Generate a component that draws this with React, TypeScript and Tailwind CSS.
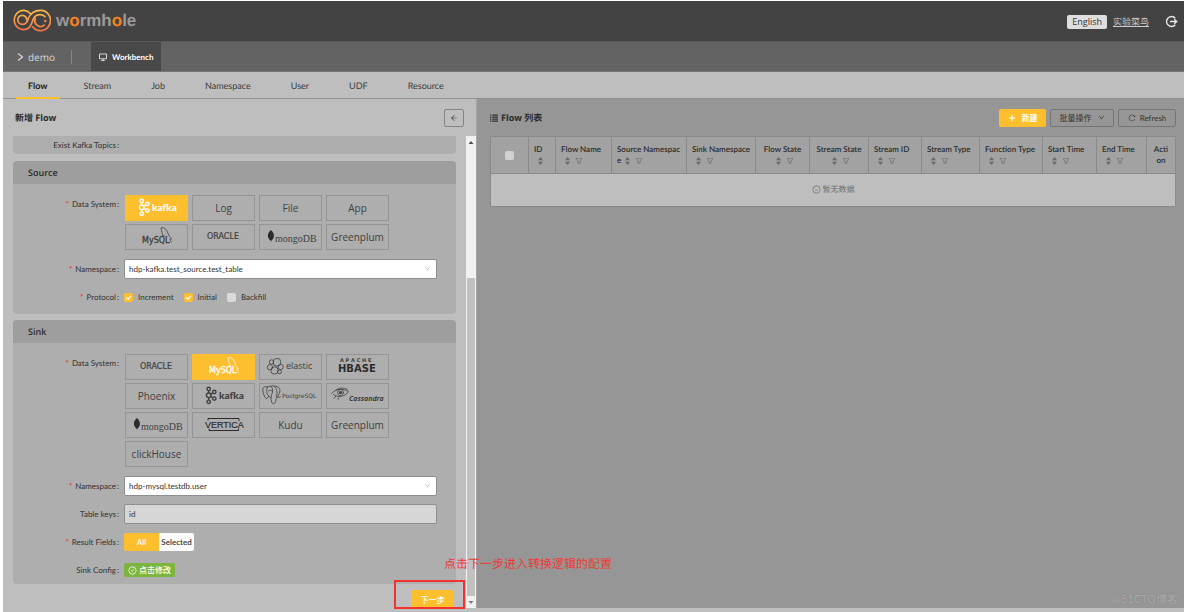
import type { ReactNode } from 'react';
import {
  AiOutlineArrowLeft,
  AiOutlineCheckCircle,
  AiOutlineDown,
  AiOutlineFilter,
  AiOutlinePlus,
  AiOutlineReload,
  AiOutlineFrown,
} from 'react-icons/ai';

const BODY = 'font-["Lato","Noto_Sans_CJK_SC",sans-serif] [text-rendering:geometricPrecision]';
const DISPLAY = 'font-["Open_Sans","Noto_Sans_CJK_SC",sans-serif]';

/* ---------- brand drawings ---------- */

function WormholeMark() {
  return (
    <svg width="38" height="24" viewBox="0 0 38 24" fill="none" strokeLinecap="round" aria-hidden="true">
      <defs>
        <linearGradient id="mark" x1="0" y1="0" x2="0" y2="24" gradientUnits="userSpaceOnUse">
          <stop offset="0" stopColor="#ffc247" />
          <stop offset="1" stopColor="#f4694a" />
        </linearGradient>
      </defs>
      <g stroke="url(#mark)" strokeWidth="1.7">
        <path d="M13.800 10.800A4.500 4.500 0 1 0 9.300 15.300C13.500 15.300 14.200 12.500 15.300 9.500C17.500 4 22 1.300 27.500 1.300A10 10.200 0 1 1 19.600 17.800" />
        <path d="M17.300 4.500A9.300 9.600 0 1 0 16.300 18.500C18.500 16 19 13.500 20 10.500C21.500 7 24.500 5.500 27.500 5.600C29.500 5.700 31 6.500 32 7.600" />
        <path d="M22.300 9.500A5.800 5.800 0 0 0 31.300 16.200" />
      </g>
      <circle cx="32.300" cy="12" r="1.200" fill="#f98a4a" />
    </svg>
  );
}

function Brand({ children }: { children: ReactNode }) {
  return (
    <svg width="61" height="24" viewBox="0 0 61 24" fill="none" stroke="none" className="shrink-0" aria-hidden="true">
      {children}
    </svg>
  );
}

function Kafka() {
  return (
    <Brand>
      <g stroke="currentColor" strokeWidth="1.400">
        <circle cx="15.700" cy="5" r="1.700" />
        <circle cx="15.700" cy="11.300" r="2.300" />
        <circle cx="15.700" cy="17.800" r="1.700" />
        <circle cx="21.300" cy="8" r="1.700" />
        <circle cx="21.300" cy="14.600" r="1.700" />
        <path d="M15.700 6.700V9M15.700 13.600V16M17.700 10.200L19.800 8.900M17.700 12.500L19.800 13.700" />
      </g>
      <text x="26" y="15" fill="currentColor" className="font-['Lato',sans-serif] text-[10px] font-black">kafka</text>
    </Brand>
  );
}

function MySql() {
  return (
    <Brand>
      <path
        d="M35 3C36.500 2 39 3 40.500 5.200C42 7.500 42 9.500 43.500 11.500L45.500 14L43.800 14.500L45.500 17.500M35 3C35.500 4.800 35.300 6 36 7.500C36.800 9 36.400 10 37 11.200C37.800 10.200 38.200 10.500 38.500 11.200"
        stroke="currentColor"
        strokeWidth=".8"
      />
      <text x="16" y="18" fill="currentColor" stroke="currentColor" strokeWidth=".3" className="font-['DejaVu_Sans',sans-serif] text-[8px]">MySQL</text>
    </Brand>
  );
}

function Oracle() {
  return (
    <Brand>
      <text x="14" y="14" fill="currentColor" stroke="currentColor" strokeWidth=".2" className="font-['DejaVu_Sans',sans-serif] text-[8px]">ORACLE</text>
    </Brand>
  );
}

function MongoDb() {
  return (
    <Brand>
      <path d="M11 5C8.600 7 7.800 9 7.900 11C8 13.200 9.500 14.800 10.700 15.700L11 17L11.300 15.700C12.500 14.800 13.800 13.200 13.900 11C14 9 13.200 7 11 5Z" fill="#2c2c2c" />
      <text x="15" y="17" fill="currentColor" className="font-['Liberation_Serif',serif] text-[10px]">mongoDB</text>
    </Brand>
  );
}

function Elastic() {
  return (
    <Brand>
      <g stroke="currentColor" strokeWidth=".8">
        <circle cx="17" cy="7.200" r="3.900" />
        <circle cx="11.500" cy="7" r="2.200" />
        <circle cx="10" cy="12.300" r="2.700" />
        <circle cx="14.500" cy="15.500" r="3.700" />
        <circle cx="19.500" cy="16.800" r="2" />
        <circle cx="20.700" cy="12" r="2.600" />
      </g>
      <text x="26" y="14" fill="currentColor" className="font-['Open_Sans',sans-serif] text-[9px]">elastic</text>
    </Brand>
  );
}

function HBase() {
  return (
    <Brand>
      <text x="13" y="7" fill="currentColor" className="font-['DejaVu_Sans',sans-serif] text-[5px] font-bold">A P A C H E</text>
      <text x="11" y="17" fill="#2c2c2c" className="font-['DejaVu_Sans',sans-serif] text-[10px] font-bold">HBASE</text>
    </Brand>
  );
}

function Postgres() {
  return (
    <Brand>
      <g stroke="currentColor" strokeWidth=".8" strokeLinecap="round" strokeLinejoin="round">
        <path d="M7.500 3C5 1.800 2.500 3 2.800 6C3 9 4.500 13.500 6 14.500C7.200 15 8 13.200 8.800 12.200M7.500 3C11 1.500 15 1.500 18 3C20.800 4.800 20.500 8 17.500 13M7.500 3C6 6 6.200 9 8.800 12.200C9.300 13 9.800 13.500 11 13.500C11.400 15.500 11 18.500 12.700 19.600C14.800 20.200 15.800 18 16 15.500C16 14 16 13.500 17.500 13C18.800 13.800 20 13.300 20.500 12.700" />
        <path d="M11.300 2.600C13 4.500 13.200 7.500 11.700 10.500C11.300 11.700 11.200 12.500 11 13.500M14.500 2.500C17 4.500 17.500 8 16.500 12.500M8.500 6.800C9.500 6.200 11 6.300 12 7" />
      </g>
      <text x="22" y="14" fill="currentColor" className="font-['DejaVu_Sans',sans-serif] text-[6px]">PostgreSQL</text>
    </Brand>
  );
}

function Cassandra() {
  return (
    <Brand>
      <g stroke="currentColor" strokeWidth=".8" strokeLinecap="round">
        <path d="M4.500 9.500C8 5 15.500 4 21.500 7.500C18 13 10.500 14 6.500 10.500M9 6C12 3.500 17 3.500 20.500 5.500M7 14.500L8.500 12.500M11 15.500L11.500 14" />
        <circle cx="13.500" cy="8.500" r="3" />
      </g>
      <circle cx="13.500" cy="8.500" r="1.600" fill="currentColor" />
      <text x="22" y="17" fill="currentColor" className="font-['Open_Sans',sans-serif] text-[7px] font-bold italic">Cassandra</text>
    </Brand>
  );
}

function Vertica() {
  return (
    <Brand>
      <text x="12" y="15" fill="#2c2c2c" stroke="#2c2c2c" strokeWidth=".2" className="font-['Liberation_Sans',sans-serif] text-[9px]">VERTICA</text>
      <path d="M15 7.500V5.500H46V8M16 15.500V17.500H45.500V15.500" stroke="#2c2c2c" strokeWidth="1" />
    </Brand>
  );
}

/* ---------- form pieces ---------- */

function SystemButton({ active, name, children }: { active?: boolean; name: string; children?: ReactNode }) {
  return (
    <button
      type="button"
      aria-label={name}
      className={
        DISPLAY +
        ' flex h-[26px] items-center justify-center overflow-hidden border text-[10px] leading-4 ' +
        (active ? 'border-[#fdbf2d] bg-[#fdbf2d] text-white' : 'border-[#959595] text-[#404040]')
      }
    >
      {children ?? name}
    </button>
  );
}

function Row({ label, htmlFor, required, top, children }: { label: string; htmlFor?: string; required?: boolean; top?: boolean; children?: ReactNode }) {
  return (
    <div className={'flex pr-[19px] ' + (top ? 'items-start' : 'h-5 items-center')}>
      <label htmlFor={htmlFor} className="w-[111px] shrink-0 pr-[5px] text-right text-[8px] leading-[18px] text-[#333]">
        {required && <span className="mr-[3px] font-bold text-[#f04134]">*</span>}
        {label}
        <span className="ml-px">:</span>
      </label>
      {children}
    </div>
  );
}

function Card({ title, children }: { title: string; children: ReactNode }) {
  return (
    <section className="shrink-0 overflow-hidden rounded-sm bg-[#aeaeae]">
      <h2 className={DISPLAY + ' h-[23px] bg-[#9e9e9e] px-[15px] text-[9px] leading-6 font-semibold text-[#2b2b2b]'}>{title}</h2>
      {children}
    </section>
  );
}

function NamespaceSelect({ id, value }: { id: string; value: string }) {
  return (
    <div className="relative flex-1">
      <select id={id} className="block h-5 w-full appearance-none rounded-xs border border-[#8e8e8e] bg-white px-1 text-[8px] text-[#333]">
        <option>{value}</option>
      </select>
      <AiOutlineDown className="pointer-events-none absolute top-1.5 right-1.5 size-[7px] text-[#b5b5b5]" />
    </div>
  );
}

function Tick({ label, checked }: { label: string; checked?: boolean }) {
  return (
    <label className="flex items-center gap-[5px] text-[8px] leading-4 text-[#333]">
      <span className="relative flex size-[9px]">
        <input type="checkbox" defaultChecked={checked} className="peer size-[9px] appearance-none rounded-xs bg-[#dadada] checked:bg-[#fdbf2d]" />
        <svg viewBox="0 0 9 9" className="pointer-events-none absolute inset-0 hidden peer-checked:block" fill="none" stroke="white" strokeWidth="1.300" aria-hidden="true">
          <path d="M2.200 4.500L4 6.300L7 2.800" />
        </svg>
      </span>
      {label}
    </label>
  );
}

/* ---------- flow table ---------- */

type Column = { name: string; width: string; sort?: boolean; filter?: boolean; center?: boolean };

const columns: Column[] = [
  { name: 'ID', width: 'w-[27px]', sort: true },
  { name: 'Flow Name', width: 'w-[56px]', sort: true, filter: true },
  { name: 'Source Namespace', width: 'w-[75px]', sort: true, filter: true },
  { name: 'Sink Namespace', width: 'w-[69px]', sort: true, filter: true },
  { name: 'Flow State', width: 'w-[54px]', sort: true, filter: true, center: true },
  { name: 'Stream State', width: 'w-[59px]', sort: true, filter: true, center: true },
  { name: 'Stream ID', width: 'w-[53px]', sort: true, filter: true },
  { name: 'Stream Type', width: 'w-[58px]', sort: true, filter: true },
  { name: 'Function Type', width: 'w-[63px]', sort: true, filter: true },
  { name: 'Start Time', width: 'w-[54px]', sort: true, filter: true },
  { name: 'End Time', width: 'w-[50px]', sort: true, filter: true },
  { name: 'Action', width: 'w-[28px]', center: true },
];

function Sorter() {
  return (
    <svg width="5" height="8" viewBox="0 0 5 8" fill="#686868" className="mr-[5px] ml-1 inline-block align-middle" aria-hidden="true">
      <path d="M2.500 0L5 3.200H0ZM2.500 8L0 4.800H5Z" />
    </svg>
  );
}

function FlowTable() {
  return (
    <table className="w-full table-fixed border-separate border-spacing-0 rounded-xs border border-[#8a8a8a] text-[8px] leading-[11px]">
      <thead>
        <tr className="h-[37px] bg-[#a2a2a2]">
          <th className="w-[38px] border-r border-b border-[#8a8a8a] p-0">
            <input type="checkbox" aria-label="Select all" className="mx-auto block size-[9px] appearance-none rounded-xs bg-[#d2d2d2]" />
          </th>
          {columns.map((c) => (
            <th
              key={c.name}
              className={
                'border-r border-b border-[#8a8a8a] py-1 align-middle font-semibold break-all text-[#2b2b2b] last:border-r-0 ' +
                c.width +
                (c.center ? ' px-[5px] text-center' : ' px-[5px] text-left')
              }
            >
              <span className={c.sort && c.name !== 'Source Namespace' ? 'block whitespace-nowrap' : ''}>{c.name}</span>
              {c.sort && <Sorter />}
              {c.filter && <AiOutlineFilter className="inline-block size-2 align-middle text-[#686868]" />}
            </th>
          ))}
        </tr>
      </thead>
      <tbody>
        <tr className="h-8 bg-[#bebebe]">
          <td colSpan={13} className="text-center text-[#6e6e6e]">
            <span className="inline-flex items-center gap-0.5">
              <AiOutlineFrown className="size-[9px]" />
              暂无数据
            </span>
          </td>
        </tr>
      </tbody>
    </table>
  );
}

const tabs = ['Stream', 'Job', 'Namespace', 'User', 'UDF', 'Resource'];

export default function App() {
  return (
    <div className={'relative flex h-screen flex-col overflow-hidden bg-white pt-px pl-[3px] ' + BODY}>
      <header className="flex h-10 shrink-0 items-center justify-between bg-[#434343] pr-1.5 pl-[10px]">
        <a href="#home" className="flex items-center gap-[5px]">
          <WormholeMark />
          <span className="font-['Liberation_Sans',sans-serif] text-[17px] leading-5 font-bold text-[#999]">
            w<span className="text-[#f5821f]">o</span>rmh<span className="text-[#f5821f]">o</span>le
          </span>
        </a>
        <div className={DISPLAY + ' flex items-center pt-px'}>
          <button type="button" className="h-3.5 rounded-xs bg-[#dedede] px-[5px] text-[9px] leading-3.5 text-[#333]">English</button>
          <a href="#user" className="ml-1.5 text-[9px] leading-3 text-[#ccc] underline">实验菜鸟</a>
          <button type="button" aria-label="Log out" className="ml-4">
            <svg width="13" height="13" viewBox="0 0 13 13" fill="none" stroke="#e6e6e6" strokeWidth="1.400" aria-hidden="true">
              <path d="M10.300 3.200A5 5 0 1 0 10.300 9.800M5 6.500H11.500M9.300 4.300L11.700 6.500L9.300 8.700" />
            </svg>
          </button>
        </div>
      </header>

      <nav className="flex h-[31px] shrink-0 items-center border-y border-t-[#575757] border-b-[#757575] bg-[#636363]">
        <a href="#demo" className={DISPLAY + ' flex w-[69px] items-center gap-1 border-r border-[#858585] pl-[14px] text-[10px] leading-3.5 text-[#d8d8d8]'}>
          <svg width="7" height="8" viewBox="0 0 7 8" fill="none" stroke="currentColor" strokeWidth="1.200" aria-hidden="true">
            <path d="M1 .5L5.500 4L1 7.500" />
          </svg>
          demo
        </a>
        <a href="#workbench" className="ml-[19px] flex h-full items-center gap-[5px] bg-[#494949] px-2 text-[8px] font-bold text-white">
          <svg width="8" height="8" viewBox="0 0 8 8" fill="none" stroke="#e6e6e6" strokeWidth=".9" aria-hidden="true">
            <path d="M.5 1H7.500V5.800H.5ZM2.300 7.500H5.700M4 5.800V7.500" />
          </svg>
          Workbench
        </a>
      </nav>

      <nav className="flex h-[27px] shrink-0 gap-4 border-b border-[#939393] bg-[#bebebe] pl-[13px] text-[9px] leading-7 text-[#3c3c3c]">
        <a href="#flow" className="-mr-1 -mb-px border-b-2 border-[#fdbf2d] px-3 font-bold text-[#222]">Flow</a>
        {tabs.map((t) => (
          <a key={t} href={'#' + t.toLowerCase()} className="px-3">{t}</a>
        ))}
      </nav>

      <main className="grid min-h-0 flex-1 grid-cols-[474fr_707fr] border-b-4 border-[#bebebe]">
        <section className="flex min-h-0 min-w-0 flex-col border-r border-[#a5a5a5] bg-[#bebebe]">
          <div className="flex h-[37px] shrink-0 items-center justify-between px-3">
            <h1 className={DISPLAY + ' text-[9px] leading-4 font-bold text-[#2b2b2b]'}>新增 Flow</h1>
            <button type="button" aria-label="Back" className="flex h-[18px] w-5 items-center justify-center rounded-xs border border-[#858585] text-[#3a3a3a]">
              <AiOutlineArrowLeft className="size-2" />
            </button>
          </div>

          <div className="flex min-h-0 flex-1">
            <form className="flex min-w-0 flex-1 flex-col gap-[6px] overflow-hidden px-[10px]" onSubmit={(e) => e.preventDefault()}>
              <section className="mb-px flex h-[18px] shrink-0 flex-col justify-end rounded-b-sm bg-[#aeaeae]">
                <Row label="Exist Kafka Topics" />
              </section>

              <Card title="Source">
                <div className="pt-[11px] pb-[7px]">
                  <Row label="Data System" required top>
                    <div className="grid w-[265px] grid-cols-4 gap-x-1 gap-y-[3px] pl-px">
                      <SystemButton name="Kafka" active><Kafka /></SystemButton>
                      <SystemButton name="Log" />
                      <SystemButton name="File" />
                      <SystemButton name="App" />
                      <SystemButton name="MySQL"><MySql /></SystemButton>
                      <SystemButton name="Oracle"><Oracle /></SystemButton>
                      <SystemButton name="MongoDB"><MongoDb /></SystemButton>
                      <SystemButton name="Greenplum" />
                    </div>
                  </Row>
                  <div className="mt-[9px] flex flex-col gap-2">
                    <Row label="Namespace" htmlFor="source-ns" required>
                      <NamespaceSelect id="source-ns" value="hdp-kafka.test_source.test_table" />
                    </Row>
                    <Row label="Protocol" required>
                      <div className="flex gap-[10px]">
                        <Tick label="Increment" checked />
                        <Tick label="Initial" checked />
                        <Tick label="Backfill" />
                      </div>
                    </Row>
                  </div>
                </div>
              </Card>

              <Card title="Sink">
                <div className="pt-[11px] pb-1">
                  <Row label="Data System" required top>
                    <div className="grid w-[265px] grid-cols-4 gap-x-1 gap-y-[3px] pl-px">
                      <SystemButton name="Oracle"><Oracle /></SystemButton>
                      <SystemButton name="MySQL" active><MySql /></SystemButton>
                      <SystemButton name="Elastic"><Elastic /></SystemButton>
                      <SystemButton name="HBase"><HBase /></SystemButton>
                      <SystemButton name="Phoenix" />
                      <SystemButton name="Kafka"><Kafka /></SystemButton>
                      <SystemButton name="PostgreSQL"><Postgres /></SystemButton>
                      <SystemButton name="Cassandra"><Cassandra /></SystemButton>
                      <SystemButton name="MongoDB"><MongoDb /></SystemButton>
                      <SystemButton name="Vertica"><Vertica /></SystemButton>
                      <SystemButton name="Kudu" />
                      <SystemButton name="Greenplum" />
                      <SystemButton name="clickHouse" />
                    </div>
                  </Row>
                  <div className="mt-[9px] flex flex-col gap-2">
                    <Row label="Namespace" htmlFor="sink-ns" required>
                      <NamespaceSelect id="sink-ns" value="hdp-mysql.testdb.user" />
                    </Row>
                    <Row label="Table keys" htmlFor="table-keys">
                      <input id="table-keys" defaultValue="id" className="h-5 min-w-0 flex-1 rounded-xs border border-[#8e8e8e] bg-[#d6d6d6] px-1 text-[8px] text-[#333]" />
                    </Row>
                    <Row label="Result Fields" required>
                      <div className="flex h-[18px] overflow-hidden rounded-xs text-[8px] font-semibold">
                        <button type="button" className="w-[35px] bg-[#fdbf2d] text-white">All</button>
                        <button type="button" className="w-[35px] bg-[#fafafa] text-[#333]">Selected</button>
                      </div>
                    </Row>
                    <Row label="Sink Config">
                      <button type="button" className="flex h-3.5 items-center gap-0.5 rounded-xs bg-[#7bb53d] px-1 text-[8px] font-medium text-white">
                        <AiOutlineCheckCircle className="size-[9px]" />
                        点击修改
                      </button>
                    </Row>
                  </div>
                </div>
              </Card>

              <button type="submit" className="mr-0.5 h-[19px] w-[43px] shrink-0 self-end rounded-t-xs bg-[#fdbf2d] text-[8px] font-medium text-white">下一步</button>
            </form>

            <div className="flex w-2.5 shrink-0 flex-col items-center bg-[#f1f1f1]" aria-hidden="true">
              <svg width="10" height="12" viewBox="0 0 10 12" fill="#4c4c4c"><path d="M5 5L7.500 8H2.500Z" /></svg>
              <span className="flex-[130]" />
              <span className="w-2 flex-[318] bg-[#c1c1c1]" />
              <svg width="10" height="12" viewBox="0 0 10 12" fill="#7a7a7a"><path d="M5 8L2.500 5H7.500Z" /></svg>
            </div>
          </div>
        </section>

        <section className="min-w-0 bg-[#969696] pr-2 pl-[13px]">
          <div className="flex h-[37px] items-center justify-between">
            <h2 className={DISPLAY + ' flex items-center gap-[3px] text-[9px] leading-4 font-bold text-[#2b2b2b]'}>
              <svg width="8" height="8" viewBox="0 0 8 8" fill="#333" aria-hidden="true">
                <path d="M0 .5H1.300V1.700H0ZM2.200 .5H8V1.700H2.200ZM0 2.500H1.300V3.700H0ZM2.200 2.500H8V3.700H2.200ZM0 4.500H1.300V5.700H0ZM2.200 4.500H8V5.700H2.200ZM0 6.500H1.300V7.700H0ZM2.200 6.500H8V7.700H2.200Z" />
              </svg>
              Flow 列表
            </h2>
            <div className="flex gap-1 text-[8px] text-[#333]">
              <button type="button" className="flex h-[18px] w-[47px] items-center justify-center gap-1.5 rounded-xs bg-[#fdbf2d] font-bold text-white">
                <AiOutlinePlus className="size-2" stroke="currentColor" strokeWidth="60" />
                新建
              </button>
              <button type="button" className="flex h-[18px] w-16 items-center justify-center gap-1.5 rounded-xs border border-[#757575]">
                批量操作
                <AiOutlineDown className="size-[7px]" />
              </button>
              <button type="button" className="flex h-[18px] w-[58px] items-center justify-center gap-1 rounded-xs border border-[#757575]">
                <AiOutlineReload className="size-2" />
                Refresh
              </button>
            </div>
          </div>
          <FlowTable />
        </section>
      </main>

      <div className="pointer-events-none absolute top-[580px] left-[394px] h-[29px] w-[71px] border-2 border-[#f0332e]" />
      <p className="pointer-events-none absolute top-[556px] left-[444px] text-[12px] leading-4 whitespace-nowrap text-[#ee3a35]">点击下一步进入转换逻辑的配置</p>
      <p className="pointer-events-none absolute right-1.5 bottom-1 text-[11px] leading-4 text-[#adadad] [text-shadow:0_0_1px_#777]">@51CTO博客</p>
    </div>
  );
}
